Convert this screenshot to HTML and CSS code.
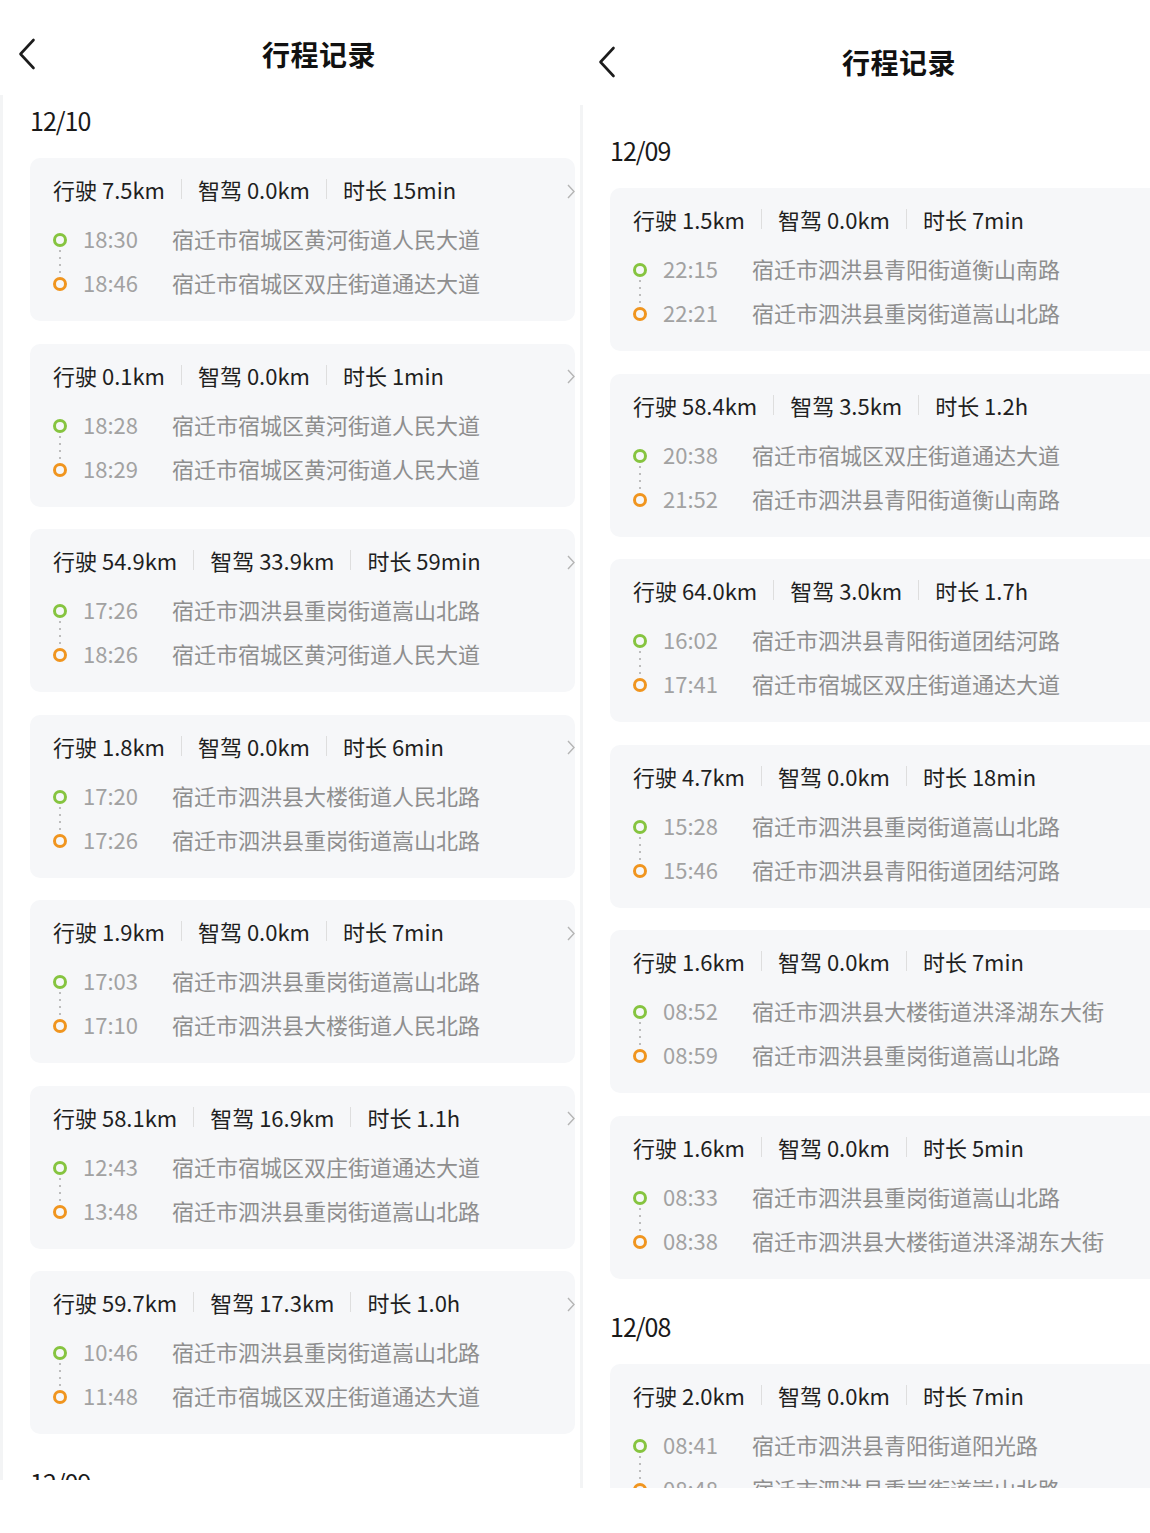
FILE: index.html
```html
<!DOCTYPE html>
<html lang="zh-CN">
<head>
<meta charset="utf-8">
<title>行程记录</title>
<link rel="stylesheet" href="styles.css">
</head>
<body>
<div class="screen">
  <section class="panel panel-left">
    <header class="nav">
      <svg class="back" width="18" height="32" viewBox="0 0 18 32"><path d="M15.5 2 L2.5 16 L15.5 30" fill="none" stroke="#1c1c1c" stroke-width="2.6" stroke-linecap="round" stroke-linejoin="round"/></svg>
      <h1 class="title">行程记录</h1>
    </header>
    <div class="list">
      <div class="date">12/10</div>

      <div class="card">
        <div class="head"><span>行驶 7.5km</span><i class="sep"></i><span>智驾 0.0km</span><i class="sep"></i><span>时长 15min</span>
          <svg class="more" width="8" height="15" viewBox="0 0 8 15"><path d="M1 1 L7 7.5 L1 14" fill="none" stroke="#b5b5b5" stroke-width="1.4"/></svg></div>
        <div class="route">
          <div class="stop"><span class="dot start"></span><span class="time">18:30</span><span class="addr">宿迁市宿城区黄河街道人民大道</span></div>
          <div class="stop"><span class="dot end"></span><span class="time">18:46</span><span class="addr">宿迁市宿城区双庄街道通达大道</span></div>
        </div>
      </div>

      <div class="card">
        <div class="head"><span>行驶 0.1km</span><i class="sep"></i><span>智驾 0.0km</span><i class="sep"></i><span>时长 1min</span>
          <svg class="more" width="8" height="15" viewBox="0 0 8 15"><path d="M1 1 L7 7.5 L1 14" fill="none" stroke="#b5b5b5" stroke-width="1.4"/></svg></div>
        <div class="route">
          <div class="stop"><span class="dot start"></span><span class="time">18:28</span><span class="addr">宿迁市宿城区黄河街道人民大道</span></div>
          <div class="stop"><span class="dot end"></span><span class="time">18:29</span><span class="addr">宿迁市宿城区黄河街道人民大道</span></div>
        </div>
      </div>

      <div class="card">
        <div class="head"><span>行驶 54.9km</span><i class="sep"></i><span>智驾 33.9km</span><i class="sep"></i><span>时长 59min</span>
          <svg class="more" width="8" height="15" viewBox="0 0 8 15"><path d="M1 1 L7 7.5 L1 14" fill="none" stroke="#b5b5b5" stroke-width="1.4"/></svg></div>
        <div class="route">
          <div class="stop"><span class="dot start"></span><span class="time">17:26</span><span class="addr">宿迁市泗洪县重岗街道嵩山北路</span></div>
          <div class="stop"><span class="dot end"></span><span class="time">18:26</span><span class="addr">宿迁市宿城区黄河街道人民大道</span></div>
        </div>
      </div>

      <div class="card">
        <div class="head"><span>行驶 1.8km</span><i class="sep"></i><span>智驾 0.0km</span><i class="sep"></i><span>时长 6min</span>
          <svg class="more" width="8" height="15" viewBox="0 0 8 15"><path d="M1 1 L7 7.5 L1 14" fill="none" stroke="#b5b5b5" stroke-width="1.4"/></svg></div>
        <div class="route">
          <div class="stop"><span class="dot start"></span><span class="time">17:20</span><span class="addr">宿迁市泗洪县大楼街道人民北路</span></div>
          <div class="stop"><span class="dot end"></span><span class="time">17:26</span><span class="addr">宿迁市泗洪县重岗街道嵩山北路</span></div>
        </div>
      </div>

      <div class="card">
        <div class="head"><span>行驶 1.9km</span><i class="sep"></i><span>智驾 0.0km</span><i class="sep"></i><span>时长 7min</span>
          <svg class="more" width="8" height="15" viewBox="0 0 8 15"><path d="M1 1 L7 7.5 L1 14" fill="none" stroke="#b5b5b5" stroke-width="1.4"/></svg></div>
        <div class="route">
          <div class="stop"><span class="dot start"></span><span class="time">17:03</span><span class="addr">宿迁市泗洪县重岗街道嵩山北路</span></div>
          <div class="stop"><span class="dot end"></span><span class="time">17:10</span><span class="addr">宿迁市泗洪县大楼街道人民北路</span></div>
        </div>
      </div>

      <div class="card">
        <div class="head"><span>行驶 58.1km</span><i class="sep"></i><span>智驾 16.9km</span><i class="sep"></i><span>时长 1.1h</span>
          <svg class="more" width="8" height="15" viewBox="0 0 8 15"><path d="M1 1 L7 7.5 L1 14" fill="none" stroke="#b5b5b5" stroke-width="1.4"/></svg></div>
        <div class="route">
          <div class="stop"><span class="dot start"></span><span class="time">12:43</span><span class="addr">宿迁市宿城区双庄街道通达大道</span></div>
          <div class="stop"><span class="dot end"></span><span class="time">13:48</span><span class="addr">宿迁市泗洪县重岗街道嵩山北路</span></div>
        </div>
      </div>

      <div class="card">
        <div class="head"><span>行驶 59.7km</span><i class="sep"></i><span>智驾 17.3km</span><i class="sep"></i><span>时长 1.0h</span>
          <svg class="more" width="8" height="15" viewBox="0 0 8 15"><path d="M1 1 L7 7.5 L1 14" fill="none" stroke="#b5b5b5" stroke-width="1.4"/></svg></div>
        <div class="route">
          <div class="stop"><span class="dot start"></span><span class="time">10:46</span><span class="addr">宿迁市泗洪县重岗街道嵩山北路</span></div>
          <div class="stop"><span class="dot end"></span><span class="time">11:48</span><span class="addr">宿迁市宿城区双庄街道通达大道</span></div>
        </div>
      </div>

      <div class="date">12/09</div>
    </div>
  </section>

  <section class="panel panel-right">
    <header class="nav">
      <svg class="back" width="18" height="32" viewBox="0 0 18 32"><path d="M15.5 2 L2.5 16 L15.5 30" fill="none" stroke="#1c1c1c" stroke-width="2.6" stroke-linecap="round" stroke-linejoin="round"/></svg>
      <h1 class="title">行程记录</h1>
    </header>
    <div class="list">
      <div class="date">12/09</div>

      <div class="card">
        <div class="head"><span>行驶 1.5km</span><i class="sep"></i><span>智驾 0.0km</span><i class="sep"></i><span>时长 7min</span></div>
        <div class="route">
          <div class="stop"><span class="dot start"></span><span class="time">22:15</span><span class="addr">宿迁市泗洪县青阳街道衡山南路</span></div>
          <div class="stop"><span class="dot end"></span><span class="time">22:21</span><span class="addr">宿迁市泗洪县重岗街道嵩山北路</span></div>
        </div>
      </div>

      <div class="card">
        <div class="head"><span>行驶 58.4km</span><i class="sep"></i><span>智驾 3.5km</span><i class="sep"></i><span>时长 1.2h</span></div>
        <div class="route">
          <div class="stop"><span class="dot start"></span><span class="time">20:38</span><span class="addr">宿迁市宿城区双庄街道通达大道</span></div>
          <div class="stop"><span class="dot end"></span><span class="time">21:52</span><span class="addr">宿迁市泗洪县青阳街道衡山南路</span></div>
        </div>
      </div>

      <div class="card">
        <div class="head"><span>行驶 64.0km</span><i class="sep"></i><span>智驾 3.0km</span><i class="sep"></i><span>时长 1.7h</span></div>
        <div class="route">
          <div class="stop"><span class="dot start"></span><span class="time">16:02</span><span class="addr">宿迁市泗洪县青阳街道团结河路</span></div>
          <div class="stop"><span class="dot end"></span><span class="time">17:41</span><span class="addr">宿迁市宿城区双庄街道通达大道</span></div>
        </div>
      </div>

      <div class="card">
        <div class="head"><span>行驶 4.7km</span><i class="sep"></i><span>智驾 0.0km</span><i class="sep"></i><span>时长 18min</span></div>
        <div class="route">
          <div class="stop"><span class="dot start"></span><span class="time">15:28</span><span class="addr">宿迁市泗洪县重岗街道嵩山北路</span></div>
          <div class="stop"><span class="dot end"></span><span class="time">15:46</span><span class="addr">宿迁市泗洪县青阳街道团结河路</span></div>
        </div>
      </div>

      <div class="card">
        <div class="head"><span>行驶 1.6km</span><i class="sep"></i><span>智驾 0.0km</span><i class="sep"></i><span>时长 7min</span></div>
        <div class="route">
          <div class="stop"><span class="dot start"></span><span class="time">08:52</span><span class="addr">宿迁市泗洪县大楼街道洪泽湖东大街</span></div>
          <div class="stop"><span class="dot end"></span><span class="time">08:59</span><span class="addr">宿迁市泗洪县重岗街道嵩山北路</span></div>
        </div>
      </div>

      <div class="card">
        <div class="head"><span>行驶 1.6km</span><i class="sep"></i><span>智驾 0.0km</span><i class="sep"></i><span>时长 5min</span></div>
        <div class="route">
          <div class="stop"><span class="dot start"></span><span class="time">08:33</span><span class="addr">宿迁市泗洪县重岗街道嵩山北路</span></div>
          <div class="stop"><span class="dot end"></span><span class="time">08:38</span><span class="addr">宿迁市泗洪县大楼街道洪泽湖东大街</span></div>
        </div>
      </div>

      <div class="date">12/08</div>

      <div class="card">
        <div class="head"><span>行驶 2.0km</span><i class="sep"></i><span>智驾 0.0km</span><i class="sep"></i><span>时长 7min</span></div>
        <div class="route">
          <div class="stop"><span class="dot start"></span><span class="time">08:41</span><span class="addr">宿迁市泗洪县青阳街道阳光路</span></div>
          <div class="stop"><span class="dot end"></span><span class="time">08:48</span><span class="addr">宿迁市泗洪县重岗街道嵩山北路</span></div>
        </div>
      </div>
    </div>
  </section>
</div>
</body>
</html>
```

FILE: styles.css
```css
* { box-sizing: border-box; }

html, body {
  margin: 0;
  padding: 0;
  background: #ffffff;
}

body {
  width: 1150px;
  height: 1533px;
  overflow: hidden;
  font-family: "Noto Sans CJK SC", "Noto Sans", sans-serif;
  color: #1f1f1f;
}

.screen {
  display: flex;
  align-items: flex-start;
  width: 1150px;
}

.panel {
  display: flex;
  flex-direction: column;
  overflow: hidden;
  flex: none;
}

.panel-left {
  width: 580px;
  height: 1480px;
}

.panel-right {
  width: 570px;
  height: 1488px;
}

/* navigation bar */
.nav {
  display: flex;
  align-items: center;
  padding-left: 18px;
  flex: none;
}

.panel-left .nav {
  height: 95px;
  padding-top: 12px;
}

.panel-right .nav {
  height: 105px;
  padding-top: 18px;
}

.back {
  flex: none;
  display: block;
}

.title {
  margin: 0 0 0 226px;
  font-size: 28px;
  line-height: 36px;
  font-weight: 700;
  color: #111111;
  letter-spacing: 0.5px;
}

/* list */
.list {
  flex: 1;
  border-left: 3px solid #f3f4f5;
  padding-left: 27px;
}

.panel-right .list {
  padding-top: 20px;
}

.date {
  height: 32px;
  line-height: 32px;
  margin: 9px 0 22px;
  font-size: 25px;
  letter-spacing: -1px;
  color: #1a1a1a;
}

.card + .date {
  margin-top: 31.5px;
}

/* card */
.card {
  width: 545px;
  height: 163px;
  margin-bottom: 22.5px;
  padding: 16px 0 24px 23px;
  background: #f6f7f9;
  border-radius: 10px;
}

.panel-right .card {
  width: 580px;
}

.head {
  display: flex;
  align-items: center;
  height: 30px;
  font-size: 22px;
  line-height: 30px;
  color: #1f1f1f;
  white-space: nowrap;
}

.sep {
  display: block;
  width: 1px;
  height: 20px;
  margin: 0 16px;
  background: #dedede;
}

.more {
  display: block;
  margin-left: auto;
  flex: none;
  position: relative;
  top: 2px;
}

.route {
  display: flex;
  flex-direction: column;
  gap: 14px;
  margin-top: 19px;
}

.stop {
  display: flex;
  align-items: center;
  height: 30px;
  font-size: 22px;
  line-height: 30px;
  white-space: nowrap;
}

.dot {
  position: relative;
  flex: none;
  width: 14px;
  height: 14px;
  margin-right: 16px;
  border-radius: 50%;
  border: 3.5px solid #86c440;
  top: 2px;
}

.dot.end {
  border-color: #f0951f;
}

.dot.start::after {
  content: "";
  position: absolute;
  left: 50%;
  top: 14px;
  width: 2px;
  height: 30px;
  margin-left: -1px;
  background: repeating-linear-gradient(to bottom, #bdbdbd 0 2px, transparent 2px 7px);
}

.time {
  flex: none;
  width: 89px;
  color: #a2a2a2;
}

.addr {
  color: #8e8e8e;
}
```
